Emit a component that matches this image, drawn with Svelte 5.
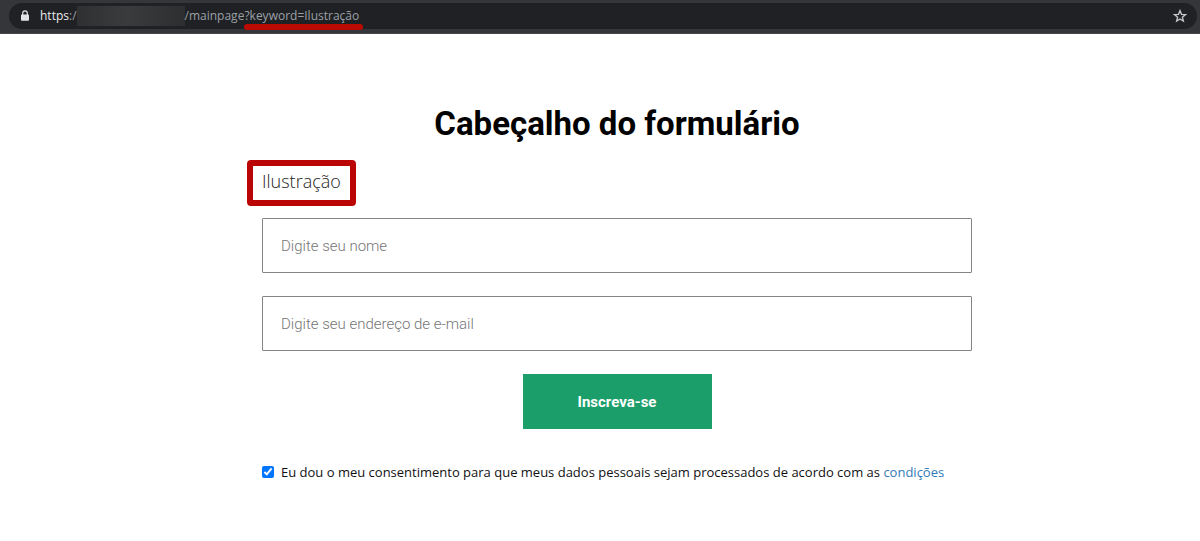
<script lang="ts">
    let name = $state('');
    let email = $state('');
    let consent = $state(true);

    const keyword = 'Ilustração';

    function handleSubmit(event: SubmitEvent) {
        event.preventDefault();
    }
</script>


<!-- Browser address bar -->
<header class="toolbar">
    <div class="address">
        <svg class="lock" viewBox="0 0 10 12" aria-hidden="true">
            <path d="M2.7 5V3.2a2.3 2.3 0 0 1 4.6 0V5" fill="none" stroke="#e2e3e5" stroke-width="1.2" />
            <rect x="1" y="4.4" width="8" height="6.4" rx="0.8" fill="#e2e3e5" />
        </svg>
        <span class="scheme">https<span class="dim">:/</span></span>
        <span class="host"></span>
        <span class="path">/mainpage<span class="query">?keyword={keyword}</span></span>
        <button type="button" class="star" aria-label="Favoritos">
            <svg viewBox="0 0 14 14" aria-hidden="true">
                <path d="M7 1.6 8.5 5.3 12.5 5.6 9.4 8.2 10.4 12.1 7 10 3.6 12.1 4.6 8.2 1.5 5.6 5.5 5.3Z" fill="none" stroke="#c6c8ca" stroke-width="1.3" />
            </svg>
        </button>
    </div>
</header>

<!-- Page content -->
<main>
    <form onsubmit={handleSubmit}>
        <h1>Cabeçalho do formulário</h1>
        <p class="keyword">{keyword}</p>

        <input class="field" type="text" aria-label="Nome" placeholder="Digite seu nome" bind:value={name} />
        <input class="field" type="email" aria-label="E-mail" placeholder="Digite seu endereço de e-mail" bind:value={email} />

        <button type="submit" class="submit">Inscreva-se</button>

        <div class="consent">
            <input id="consent" type="checkbox" bind:checked={consent} />
            <label for="consent">Eu dou o meu consentimento para que meus dados pessoais sejam processados de acordo com as <a href="#condicoes">condições</a></label>
        </div>
    </form>
</main>

<style>
    :global(body) {
        margin: 0;
        background: #fff;
    }

    .toolbar {
        box-sizing: border-box;
        padding: 3px 3px 4px 9px;
        background: #35363a;
        border-bottom: 1px solid #4a4548;
    }

    .address {
        display: flex;
        align-items: center;
        height: 26px;
        padding: 0 10px 0 11px;
        border-radius: 13px;
        background: #202124;
        font: 12px/26px "Open Sans", sans-serif;
        color: #9aa0a6;
    }

    .lock {
        width: 10px;
        height: 12px;
        margin-right: 10px;
    }

    .scheme {
        color: #e8eaed;
    }

    .dim {
        color: #9aa0a6;
    }

    .host {
        width: 108px;
        height: 20px;
        background: linear-gradient(90deg, #2f3032, #3a3b3d 45%, #2d2e30);
    }

    .query {
        position: relative;
    }

    .query::after {
        content: '';
        position: absolute;
        left: 0;
        right: -4px;
        bottom: -6px;
        height: 6px;
        border-radius: 3px;
        background: #bb0a00;
    }

    .star {
        display: flex;
        margin-left: auto;
        padding: 0;
        border: none;
        background: none;
        cursor: pointer;
    }

    .star svg {
        width: 14px;
        height: 14px;
    }

    main {
        padding: 69px 20px 40px 54px;
    }

    form {
        display: flex;
        flex-direction: column;
        max-width: 710px;
        margin: 0 auto;
    }

    h1 {
        margin: 0 0 15px;
        font: 700 33px/42px Roboto, sans-serif;
        text-align: center;
        color: #000;
    }

    .keyword {
        align-self: flex-start;
        margin: 0 0 12px -15px;
        padding: 2px 9px 6px;
        border: 6px solid #b90504;
        border-radius: 4px;
        font: 300 18px/26px "Open Sans", sans-serif;
        color: #222;
    }

    .field {
        box-sizing: border-box;
        width: 100%;
        height: 55px;
        margin: 0 0 23px;
        padding: 0 18px;
        border: 1px solid #858585;
        border-radius: 1px;
        background: #fff;
        font: 300 15px Roboto, sans-serif;
        color: #222;
    }

    .field::placeholder {
        color: #757575;
        opacity: 1;
    }

    .submit {
        align-self: center;
        width: 189px;
        height: 55px;
        border: none;
        background: #1b9e69;
        font: 700 15px Roboto, sans-serif;
        color: #fff;
        cursor: pointer;
    }

    .consent {
        display: flex;
        align-items: center;
        gap: 7px;
        margin-top: 33px;
        font: 13px/20px "Open Sans", sans-serif;
        color: #111;
    }

    .consent input {
        flex: none;
        width: 12px;
        height: 12px;
        margin: 0;
        accent-color: #0075ff;
    }

    .consent a {
        color: #337ab7;
        text-decoration: none;
    }
</style>
